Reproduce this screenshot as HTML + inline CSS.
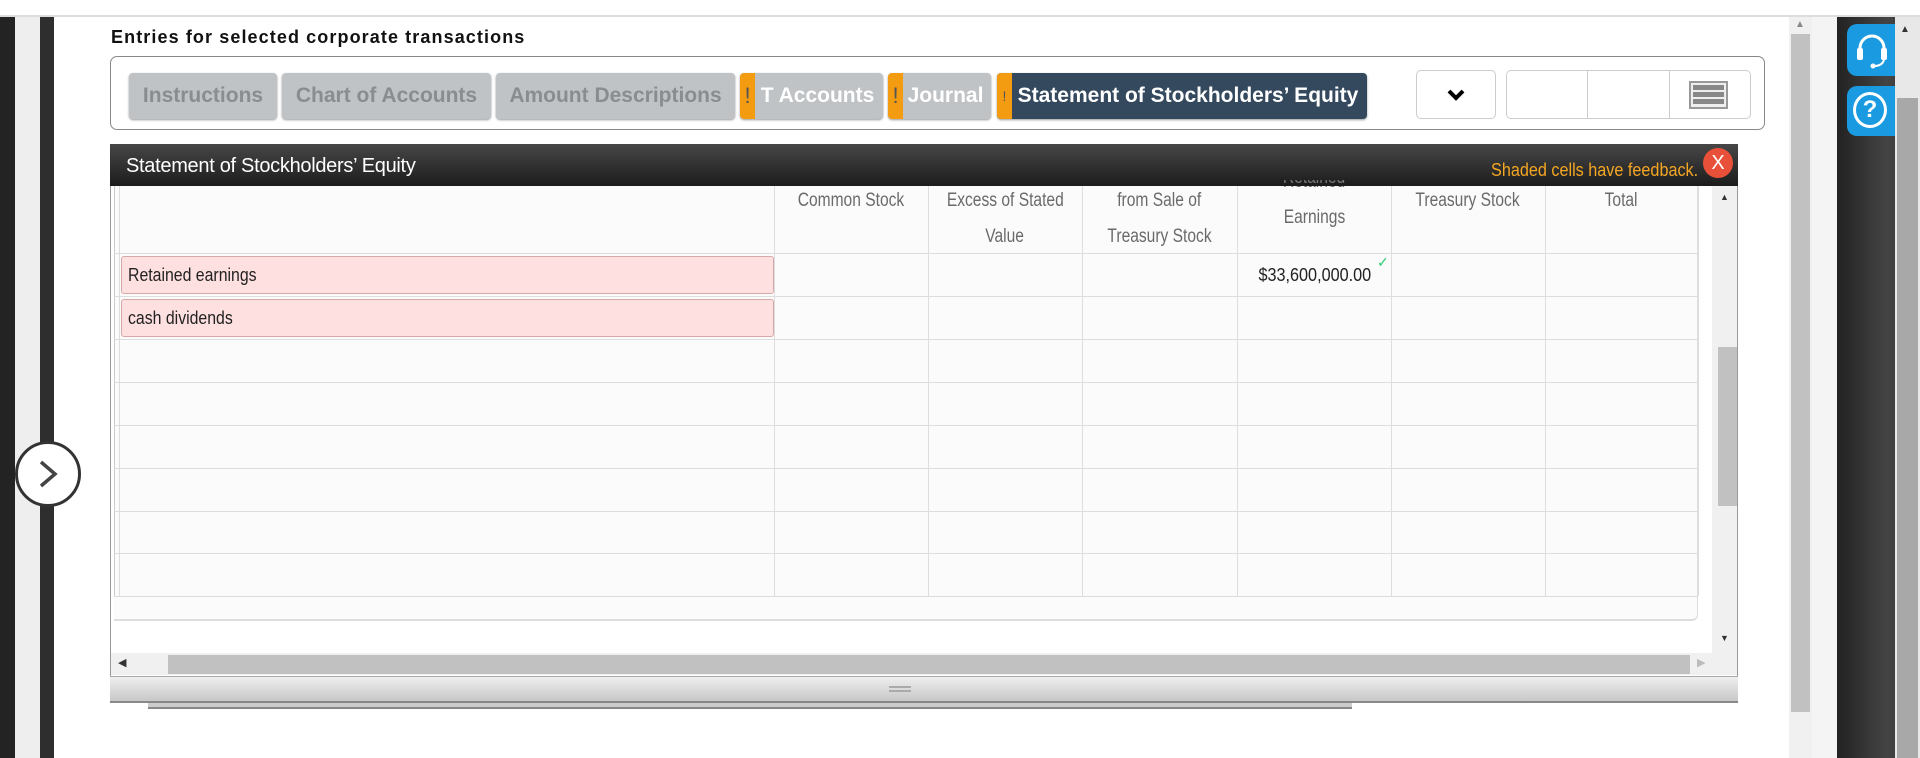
<!DOCTYPE html>
<html><head><meta charset="utf-8"><style>
*{box-sizing:border-box;margin:0;padding:0}
body{width:1920px;height:758px;position:relative;overflow:hidden;background:#fff;font-family:"Liberation Sans",sans-serif}
.a{position:absolute}
.c{display:inline-block;transform:scaleX(.82);transform-origin:center;white-space:nowrap}
.cl{display:inline-block;transform:scaleX(.88);transform-origin:left;white-space:nowrap}
.tab{position:absolute;top:73px;height:46px;background:#bfc3c6;border-radius:4px;color:#8a8d90;font-weight:bold;font-size:21px;line-height:46px;text-align:center;box-shadow:0 1px 2px #999}
.ex{position:absolute;left:0;top:0;width:15px;height:46px;background:#f39c12;border-radius:4px 0 0 4px;color:#555;font-weight:normal;line-height:46px;font-size:22px}
.vl{position:absolute;top:186px;height:410px;width:1px;background:#ddd}
.hl{position:absolute;left:114px;width:1584px;height:1px;background:#ddd}
.hd{position:absolute;top:183px;color:#6a6a6a;font-size:19px;line-height:36px;text-align:center}
.pk{position:absolute;left:121px;width:653px;height:38px;background:#ffe0e0;border:1px solid #d6a8a8;border-radius:3px;font-size:18px;line-height:36px;padding-left:6px;color:#222}
</style></head><body>
<div class="a" style="left:0;top:15px;width:1920px;height:2px;background:#ddd"></div>
<div class="a" style="left:0;top:17px;width:15px;height:741px;background:#232323"></div>
<div class="a" style="left:15px;top:17px;width:25px;height:741px;background:#eee"></div>
<div class="a" style="left:40px;top:17px;width:14px;height:741px;background:#2e2e2e"></div>

<div class="a" style="left:111px;top:27px;font-weight:bold;font-size:18px;letter-spacing:1.1px;color:#111;white-space:nowrap">Entries for selected corporate transactions</div>

<div class="a" style="left:110px;top:56px;width:1655px;height:74px;border:1px solid #888;border-radius:7px"></div>
<div class="tab" style="left:129px;width:148px">Instructions</div>
<div class="tab" style="left:282px;width:209px">Chart of Accounts</div>
<div class="tab" style="left:496px;width:239px">Amount Descriptions</div>
<div class="tab" style="left:740px;width:143px;color:#fff;padding-left:12px"><span class="ex">!</span>T Accounts</div>
<div class="tab" style="left:888px;width:103px;color:#fff;padding-left:12px"><span class="ex">!</span>Journal</div>
<div class="tab" style="left:997px;width:370px;background:#34495e;color:#fff;padding-left:12px"><span class="ex" style="font-size:14px">!</span>Statement of Stockholders’ Equity</div>

<div class="a" style="left:1416px;top:70px;width:80px;height:49px;border:1px solid #ccc;border-radius:5px"></div>
<svg class="a" style="left:1446px;top:88px" width="20" height="14"><path d="M3 3 L10 10 L17 3" stroke="#000" stroke-width="4" fill="none"/></svg>
<div class="a" style="left:1506px;top:70px;width:245px;height:49px;border:1px solid #ccc;border-radius:5px"></div>
<div class="a" style="left:1587px;top:70px;width:1px;height:49px;background:#ccc"></div>
<div class="a" style="left:1669px;top:70px;width:1px;height:49px;background:#ccc"></div>
<div class="a" style="left:1689px;top:81px;width:39px;height:28px;border:2px solid #999;background:#eee"></div>
<div class="a" style="left:1693px;top:85px;width:31px;height:5px;background:#888"></div>
<div class="a" style="left:1693px;top:92px;width:31px;height:5px;background:#888"></div>
<div class="a" style="left:1693px;top:99px;width:31px;height:5px;background:#888"></div>

<div class="a" style="left:1789px;top:17px;width:23px;height:741px;background:#f0f0f0"></div>
<div class="a" style="left:1791px;top:34px;width:19px;height:678px;background:#c1c1c1"></div>
<div class="a" style="left:1795px;top:19px;font-size:10px;color:#888">▲</div>
<div class="a" style="left:1812px;top:17px;width:25px;height:741px;background:#f4f4f4"></div>
<div class="a" style="left:1837px;top:17px;width:83px;height:741px;background:linear-gradient(90deg,#222,#444 60%,#333)"></div>
<div class="a" style="left:1847px;top:24px;width:48px;height:52px;background:#1a9ae0;border-radius:10px 0 0 10px"></div>
<svg class="a" style="left:1852px;top:28px" width="40" height="44"><path d="M8 26 V20 A12 12 0 0 1 32 20 V26" stroke="#fff" stroke-width="3" fill="none"/><rect x="5" y="20" width="6" height="12" rx="2" fill="#fff"/><rect x="29" y="20" width="6" height="12" rx="2" fill="#fff"/><path d="M32 32 Q30 38 22 38" stroke="#fff" stroke-width="2" fill="none"/><circle cx="21" cy="38" r="2.5" fill="#fff"/></svg>
<div class="a" style="left:1847px;top:86px;width:48px;height:50px;background:#1a9ae0;border-radius:10px 0 0 10px"></div>
<div class="a" style="left:1853px;top:92px;width:34px;height:36px;border:3px solid #fff;border-radius:50%;color:#fff;font-size:24px;font-weight:bold;text-align:center;line-height:30px">?</div>
<div class="a" style="left:1895px;top:17px;width:25px;height:741px;background:#e8e8e8"></div>
<div class="a" style="left:1897px;top:98px;width:21px;height:660px;background:#a8a8a8"></div>
<div class="a" style="left:1900px;top:24px;font-size:10px;color:#333">▲</div>

<div class="a" style="left:110px;top:186px;width:1628px;height:516px;background:#fff;border-left:1px solid #999;border-right:1px solid #999"></div>
<div class="a" style="left:114px;top:186px;width:1584px;height:435px;background:#fbfbfb;border-bottom:2px solid #ddd;border-right:1px solid #ddd;border-radius:0 0 6px 0"></div>
<div class="a" style="left:114px;top:186px;width:1px;height:410px;background:#ccc"></div>
<div class="a" style="left:119px;top:186px;width:1px;height:410px;background:#ddd"></div>
<div class="vl" style="left:774px"></div><div class="vl" style="left:928px"></div><div class="vl" style="left:1082px"></div><div class="vl" style="left:1237px"></div><div class="vl" style="left:1391px"></div><div class="vl" style="left:1545px"></div><div class="vl" style="left:1698px"></div>
<div class="hl" style="top:253px"></div><div class="hl" style="top:296px"></div><div class="hl" style="top:339px"></div><div class="hl" style="top:382px"></div><div class="hl" style="top:425px"></div><div class="hl" style="top:468px"></div><div class="hl" style="top:511px"></div><div class="hl" style="top:553px"></div><div class="hl" style="top:596px"></div>
<div class="hd" style="left:774px;width:154px"><span class="c">Common Stock</span></div>
<div class="hd" style="left:928px;width:154px"><span class="c">Excess of Stated</span><br><span class="c">Value</span></div>
<div class="hd" style="left:1082px;width:155px"><span class="c">from Sale of</span><br><span class="c">Treasury Stock</span></div>
<div class="hd" style="left:1237px;width:154px;top:164px"><span class="c">Retained</span><br><span class="c">Earnings</span></div>
<div class="hd" style="left:1391px;width:154px"><span class="c">Treasury Stock</span></div>
<div class="hd" style="left:1545px;width:153px"><span class="c">Total</span></div>
<div class="pk" style="top:256px"><span class="cl">Retained earnings</span></div>
<div class="pk" style="top:299px"><span class="cl">cash dividends</span></div>
<div class="a" style="left:1237px;top:265px;width:134px;text-align:right;font-size:18px;color:#222"><span class="c" style="transform:scaleX(.9);transform-origin:right">$33,600,000.00</span></div>
<div class="a" style="left:1377px;top:254px;color:#2ecc71;font-size:14px">✓</div>

<div class="a" style="left:110px;top:144px;width:1628px;height:42px;background:linear-gradient(#474747,#1c1c1c)"></div>
<div class="a" style="left:1237px;top:180px;width:154px;height:6px;overflow:hidden;color:#777;font-size:19px;text-align:center"><div style="margin-top:-13px"><span class="c">Retained</span></div></div>
<div class="a" style="left:126px;top:155px;color:#fff;font-size:20px;letter-spacing:-0.3px">Statement of Stockholders’ Equity</div>
<div class="a" style="left:1420px;top:160px;width:278px;text-align:right;color:#f5a623;font-size:18px;white-space:nowrap"><span class="c" style="transform:scaleX(.9);transform-origin:right">Shaded cells have feedback.</span></div>
<div class="a" style="left:1703px;top:148px;width:30px;height:30px;border-radius:50%;background:#e8503a;color:#fff;font-size:20px;text-align:center;line-height:30px">X</div>

<div class="a" style="left:1712px;top:186px;width:25px;height:467px;background:#f0f0f0"></div>
<div class="a" style="left:1718px;top:347px;width:19px;height:159px;background:#c1c1c1"></div>
<div class="a" style="left:1720px;top:192px;font-size:9px;color:#333">▲</div>
<div class="a" style="left:1720px;top:633px;font-size:9px;color:#333">▼</div>
<div class="a" style="left:111px;top:653px;width:1626px;height:22px;background:#f0f0f0"></div>
<div class="a" style="left:168px;top:655px;width:1522px;height:19px;background:#c1c1c1"></div>
<div class="a" style="left:118px;top:656px;font-size:11px;color:#333">◀</div>
<div class="a" style="left:1697px;top:656px;font-size:11px;color:#bbb">▶</div>
<div class="a" style="left:110px;top:676px;width:1628px;height:27px;background:linear-gradient(#eee,#c8c8c8);border-top:1px solid #aaa;border-bottom:2px solid #888"></div>
<div class="a" style="left:889px;top:686px;width:22px;height:2px;background:#aaa"></div>
<div class="a" style="left:889px;top:690px;width:22px;height:2px;background:#aaa"></div>
<div class="a" style="left:148px;top:703px;width:1204px;height:6px;background:#ccc;border-bottom:2px solid #888"></div>

<div class="a" style="left:15px;top:441px;width:66px;height:66px;border-radius:50%;background:#fff;border:3px solid #333"></div>
<svg class="a" style="left:34px;top:458px" width="28" height="32"><path d="M7 4 L21 16 L7 28" stroke="#444" stroke-width="3.5" fill="none"/></svg>
</body></html>
